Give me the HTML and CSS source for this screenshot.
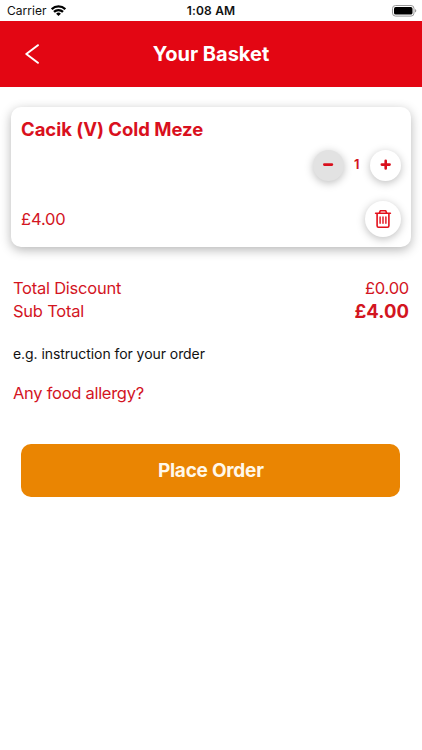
FILE: index.html
```html
<!DOCTYPE html>
<html lang="en">
<head>
<meta charset="utf-8">
<title>Your Basket</title>
<link rel="stylesheet" href="styles.css">
</head>
<body>
<div class="status">
  <div class="status-left"><span class="carrier">Carrier</span>
    <svg class="wifi" width="15" height="11" viewBox="0 0 15 11"><g fill="none" stroke="#000" stroke-width="2.3"><path d="M.7 4.2a9.7 9.7 0 0 1 13.6 0"/><path d="M3 6.9a6.4 6.4 0 0 1 9 0"/></g><path d="M7.5 11 5.1 8.8a3.4 3.4 0 0 1 4.8 0z"/></svg>
  </div>
  <span class="clock">1:08 AM</span>
  <svg class="battery" width="25" height="12" viewBox="0 0 25 12"><rect x=".5" y=".5" width="21.5" height="10.6" rx="3" fill="#fff" stroke="#999"/><rect x="2" y="2" width="18.5" height="7.6" rx="1.7"/><path d="M23 4v3.6q1.3-.5 1.3-1.8T23 4z" fill="#999"/></svg>
</div>
<header class="header">
  <svg class="back" width="14" height="20" viewBox="0 0 14 20"><path d="M12.9 1.2 1.3 10l11.6 8.8" fill="none" stroke="#fff" stroke-width="2" stroke-linecap="round" stroke-linejoin="round"/></svg>
  <h1 class="title">Your Basket</h1>
</header>
<main>
  <section class="card">
    <h2 class="item-name">Cacik (V) Cold Meze</h2>
    <div class="stepper">
      <button class="round minus" aria-label="Remove one"><svg width="12" height="12" viewBox="0 0 12 12"><path d="M2.3 5.6h7.6" stroke="#d9101d" stroke-width="2.6" stroke-linecap="round"/></svg></button>
      <span class="qty">1</span>
      <button class="round" aria-label="Add one"><svg width="12" height="12" viewBox="0 0 12 12"><path d="M1.8 5.6h7.8M5.7 1.7v7.8" stroke="#d9101d" stroke-width="2.6" stroke-linecap="round"/></svg></button>
    </div>
    <div class="card-foot">
      <span class="price">£4.00</span>
      <button class="round trash" aria-label="Delete"><svg width="18" height="20" viewBox="0 0 18 20"><g fill="none" stroke="#e3101b" stroke-width="1.6" stroke-linejoin="round" stroke-linecap="round"><path d="M1.6 4.2h14.8M3.1 4.2v12.6q0 1.4 1.4 1.4h9q1.4 0 1.4-1.4V4.2M5.3 4l1.1-2.3h5.2L12.7 4"/><path d="M6.1 7.9v6.3M9 7.9v6.3M11.9 7.9v6.3" stroke-width="1.4"/></g></svg></button>
    </div>
  </section>
  <section class="totals">
    <div class="row"><span>Total Discount</span><span>£0.00</span></div>
    <div class="row"><span>Sub Total</span><span class="sum">£4.00</span></div>
  </section>
  <p class="note">e.g. instruction for your order</p>
  <p class="allergy">Any food allergy?</p>
  <button class="order">Place Order</button>
</main>
</body>
</html>
```
FILE: styles.css
```css
* { box-sizing: border-box; }
body { margin: 0; height: 750px; background: #fff; color: #d3151f; font-family: Inter, "Liberation Sans", sans-serif; overflow: hidden; }
h1, h2, p { margin: 0; }
svg { display: block; flex: none; }
button { font-family: inherit; border: 0; padding: 0; }
.status { height: 20.6px; display: grid; grid-template-columns: 1fr auto 1fr; align-items: center; padding: 1px 5px 0 7px; color: #111; font-size: 12px; }
.status-left { display: flex; align-items: center; gap: 5px; }
.carrier { letter-spacing: .02px; }
.clock { font-weight: 600; letter-spacing: .2px; margin-right: 2px; }
.battery { justify-self: end; }
.header { height: 66px; background: #e30613; display: grid; grid-template-columns: 60px 1fr 60px; align-items: center; }
.back { margin-left: 25px; }
.title { color: #fff; text-align: center; font-size: 20px; font-weight: 700; line-height: 24px; letter-spacing: 0; }
.card { margin: 20.4px 11px 0; height: 140px; border-radius: 10px; background: #fff; box-shadow: 0 3px 11px rgba(0,0,0,.29); padding: 10px; display: flex; flex-direction: column; }
.item-name { font-size: 18.5px; line-height: 24px; font-weight: 700; color: #d9101d; letter-spacing: -.03px; }
.stepper { display: flex; align-items: center; justify-content: flex-end; margin-top: 9px; }
.round { width: 31px; height: 31px; border-radius: 50%; background: #fff; box-shadow: 0 2px 9px rgba(0,0,0,.26); display: flex; align-items: center; justify-content: center; }
.minus { background: #e2e2e2; }
.qty { width: 26.5px; text-align: center; font-size: 12.5px; line-height: 16px; font-weight: 700; }
.card-foot { display: flex; justify-content: space-between; align-items: center; margin-top: 20px; }
.price { font-size: 16.5px; letter-spacing: -.15px; }
.trash { width: 36px; height: 36px; }
.totals { margin: 29px 13px 0; }
.row { display: flex; justify-content: space-between; align-items: center; height: 23.5px; font-size: 16.5px; letter-spacing: -.24px; }
.sum { font-size: 18.5px; font-weight: 700; letter-spacing: .05px; }
.note { margin: 21px 13px 0; color: #111; font-size: 14px; line-height: 20px; letter-spacing: -.06px; }
.allergy { margin: 18px 13px 0; font-size: 16.5px; line-height: 22px; letter-spacing: -.28px; }
.order { display: block; width: 379px; height: 53px; margin: 40px 0 0 21.3px; padding-top: 1px; border-radius: 10px; background: #ea8502; color: #fff8ea; font-size: 19px; font-weight: 700; letter-spacing: -.24px; }
```
